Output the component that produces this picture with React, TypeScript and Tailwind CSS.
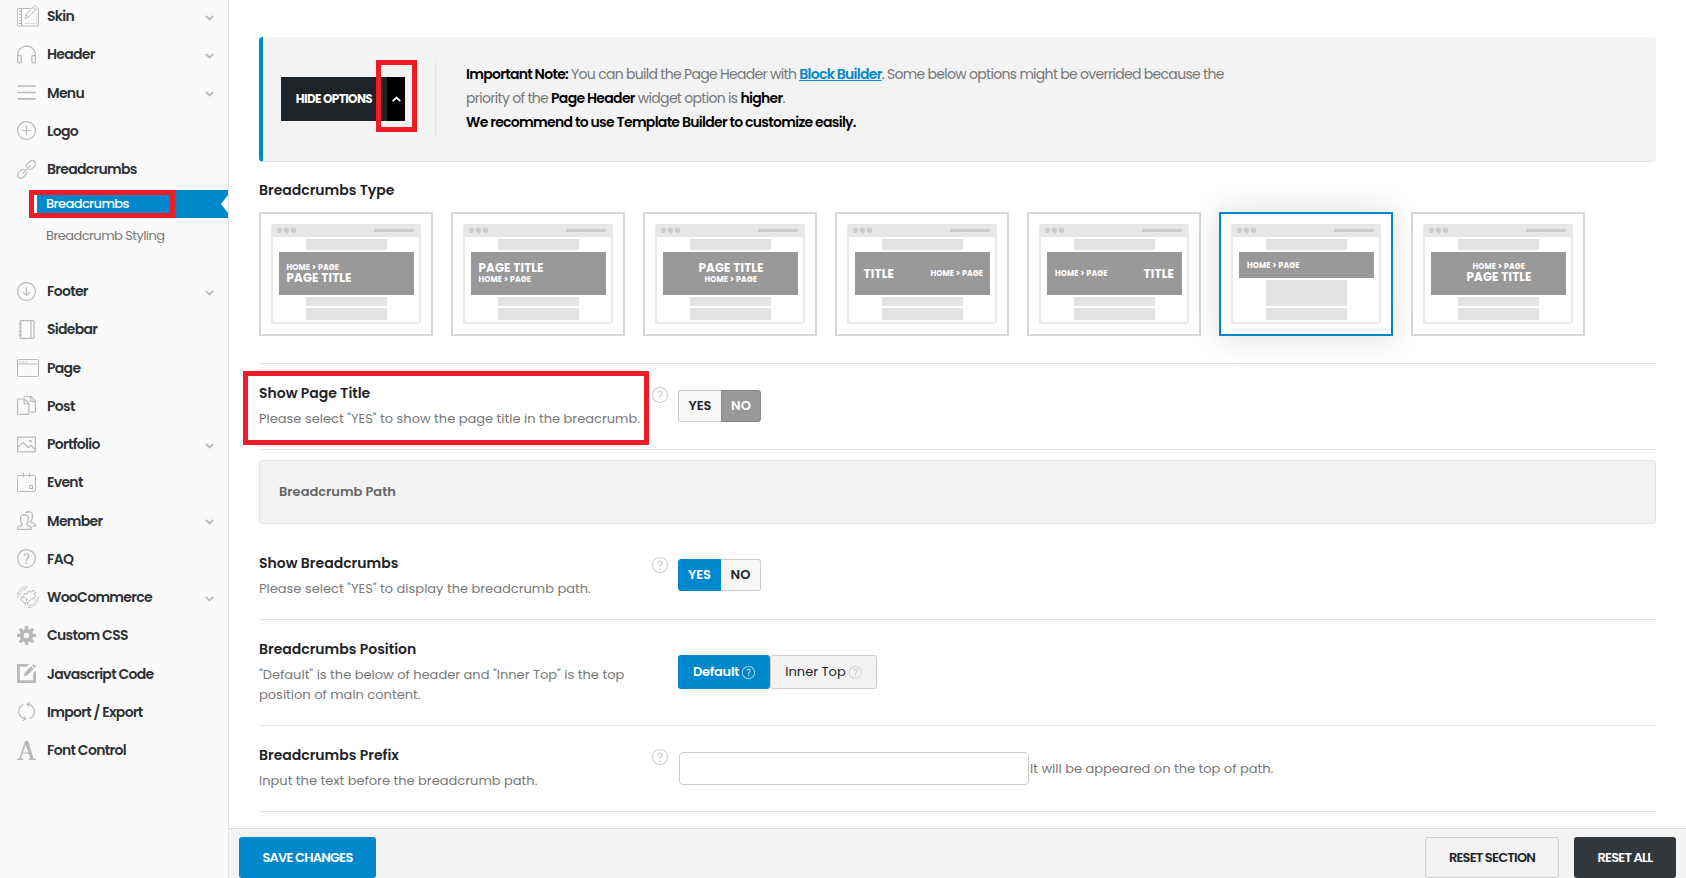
import type { ReactNode } from "react";
import clsx from "clsx";
import {
  SlEarphones,
  SlMenu,
  SlPlus,
  SlLink,
  SlArrowDownCircle,
  SlNotebook,
  SlDocs,
  SlPicture,
  SlPeople,
  SlQuestion,
  SlRefresh,
} from "react-icons/sl";

interface NavEntry {
  label: string;
  icon: ReactNode;
  expandable?: boolean;
}

const SkinIcon = () => (
  <svg width="22" height="22" viewBox="0 0 22 22" fill="none" stroke="currentColor" strokeWidth="1">
    <path d="M13.5 3.5H1.5a1 1 0 0 0-1 1v15.5a1 1 0 0 0 1 1h19a1 1 0 0 0 1-1V4.5a1 1 0 0 0-1-1" />
    <path d="M4.5 3.5v17.5M2 6.5h2M2 9.5h2M2 12.5h2M2 15.5h2M2 18.5h2" />
    <path d="M8 13.5l1-4L17.5.9c.8-.7 3.2 1.4 2.4 2.4L11.5 12zM16 2.5l2.4 2.4M9 9.5l2.5 2.5" />
    <path d="M19.5 8v10.5h-12" strokeOpacity=".4" />
  </svg>
);

const PageIcon = () => (
  <svg width="22" height="18" viewBox="0 0 22 18" fill="none" stroke="currentColor" strokeWidth="1">
    <rect x=".5" y=".5" width="21" height="17" rx="1.5" />
    <path d="M.5 5h21" />
    <path d="M2.5 3h1.5M5.5 3H7M8.5 3H10" />
  </svg>
);

const EventIcon = () => (
  <svg width="19" height="19" viewBox="0 0 19 19" fill="none" stroke="currentColor" strokeWidth="1">
    <rect x=".5" y="2.5" width="18" height="16" rx="1" />
    <path d="M6.5 0v4M12.5 0v4" />
    <rect x="12.5" y="12.5" width="3" height="3" />
  </svg>
);

const WooIcon = () => (
  <svg width="22" height="22" viewBox="0 0 22 22" fill="none" stroke="currentColor" strokeWidth="1">
    <path d="M1 12C-.3 5.5 4 .8 10.5.8M3 9.5C3.2 5.5 6 3 9.5 2.8M21 10.5c1 6-3.5 11-10 11M19 13c-.5 3.5-3 6-7 6.5" strokeDasharray="3 .7" />
    <path d="M5 11l2-1.500.5-2L10 8l1-2.500 2-1 1 2 2-2.500 2.500 3L17 8.500l1.500 1-1.500 3-2.500.5-4 4H7L3.500 13z" />
    <path d="M5.5 11.5c2-.5 4.5.5 4 3M9 14.5l1.5-1M7.5 16.5l1 3M10.5 17l.5 2.5" />
  </svg>
);

const GearIcon = () => (
  <svg width="19" height="19" viewBox="0 0 19 19">
    <circle cx="9.5" cy="9.5" r="4.7" fill="none" stroke="currentColor" strokeWidth="3.8" />
    <g fill="currentColor">
      {[0, 45, 90, 135, 180, 225, 270, 315].map((deg) => (
        <path key={deg} d="M8 0h3l.4 4H7.6z" transform={`rotate(${deg} 9.5 9.5)`} />
      ))}
    </g>
  </svg>
);

const EditIcon = () => (
  <svg width="19" height="19" viewBox="0 0 19 19" fill="currentColor">
    <path d="M0 0h12.5L9.7 2.8H2.8v13.4h13.4V9.3L19 6.5V19H0z" />
    <path d="M14 2.3l2.7 2.7-6.2 6.2-3.7 1 1-3.7zM14.9 1.4L16.3 0 19 2.7l-1.4 1.4z" />
  </svg>
);

const FontIcon = () => (
  <svg width="19" height="19" viewBox="0 0 19 19" fill="currentColor" fillRule="evenodd">
    <path d="M8 0h3.3l4.9 16.2c.3 1 .9 1.500 2.800 1.600V19h-7.500v-1.200c1.400-.1 1.700-.6 1.400-1.600l-1-3.400H5.400l-1 3.200c-.3 1.200.1 1.700 1.800 1.800V19H0v-1.200c1.700-.1 2.400-.6 2.800-1.800zM8.700 4.200L5.900 11.500h5.400z" />
  </svg>
);

const Chevron = ({ className }: { className?: string }) => (
  <svg width="9" height="6" viewBox="0 0 9 6" fill="none" stroke="currentColor" strokeWidth="1.8" className={className}>
    <path d="M.7.8l3.800 3.700L8.300.8" />
  </svg>
);

const navTop: NavEntry[] = [
  { label: "Skin", icon: <SkinIcon />, expandable: true },
  { label: "Header", icon: <SlEarphones />, expandable: true },
  { label: "Menu", icon: <SlMenu />, expandable: true },
  { label: "Logo", icon: <SlPlus /> },
  { label: "Breadcrumbs", icon: <SlLink /> },
];

const navBottom: NavEntry[] = [
  { label: "Footer", icon: <SlArrowDownCircle />, expandable: true },
  { label: "Sidebar", icon: <SlNotebook /> },
  { label: "Page", icon: <PageIcon /> },
  { label: "Post", icon: <SlDocs /> },
  { label: "Portfolio", icon: <SlPicture />, expandable: true },
  { label: "Event", icon: <EventIcon /> },
  { label: "Member", icon: <SlPeople />, expandable: true },
  { label: "FAQ", icon: <SlQuestion /> },
  { label: "WooCommerce", icon: <WooIcon />, expandable: true },
  { label: "Custom CSS", icon: <GearIcon /> },
  { label: "Javascript Code", icon: <EditIcon /> },
  { label: "Import / Export", icon: <SlRefresh /> },
  { label: "Font Control", icon: <FontIcon /> },
];

const NavItem = ({ label, icon, expandable }: NavEntry) => (
  <li className="flex h-[38.25px] items-center pl-[17px] pr-[14px]">
    <span className="flex w-[30px] shrink-0 items-center text-[19px] text-[#b9b9b9]">{icon}</span>
    <span className="flex-1 whitespace-nowrap text-sm font-semibold tracking-[-0.05em] text-[#2c3136]">{label}</span>
    {expandable && <Chevron className="mt-[3px] text-[#bbb]" />}
  </li>
);

const Sidebar = () => (
  <aside className="w-[229px] shrink-0 overflow-hidden border-r border-[#e5e5e5] bg-[#fafafa]">
    <ul className="-mt-[3px]">
      {navTop.map((item) => (
        <NavItem key={item.label} {...item} />
      ))}
    </ul>
    <ul className="mt-[1.75px] h-[82px] text-[13px]">
      <li className="relative ml-[29px] flex h-7 items-center bg-[#08c] pl-[17px] font-medium tracking-[-0.045em] text-white">
        Breadcrumbs
        {/* highlight frame */}
        <span className="absolute left-0 top-0 h-7 w-[146px] border-[5px] border-[#ee1c25]" />
        <span className="absolute left-[5px] top-[5px] h-[18px] w-[3px] bg-white" />
        <svg className="absolute right-0 top-[5px]" width="7" height="18" viewBox="0 0 7 18">
          <path d="M7 0v18L0 9z" fill="#fff" />
        </svg>
      </li>
      <li className="mt-1 flex h-7 items-center pl-[46px] tracking-[-0.042em] text-[#777]">Breadcrumb Styling</li>
    </ul>
    <ul>
      {navBottom.map((item) => (
        <NavItem key={item.label} {...item} />
      ))}
    </ul>
  </aside>
);

const Notice = () => (
  <div className="flex h-[125px] items-center rounded border-b border-l-4 border-b-[#e3e3e3] border-l-[#08c] bg-[#f3f3f3] pl-[18px]">
    <button className="relative flex h-11 w-[124px] bg-[#1d2327] text-white">
      <span className="flex h-full w-[106px] items-center justify-center whitespace-nowrap text-xs font-bold tracking-[-0.6px]">
        HIDE OPTIONS
      </span>
      <span className="flex h-full w-[18px] items-center justify-center bg-black">
        <Chevron className="rotate-180" />
      </span>
      <span className="absolute -top-[17px] left-[95px] h-[72px] w-[41px] border-[5px] border-[#ee1c25]" />
    </button>
    <div className="ml-[30px] h-[74px] w-px bg-[#e3e3e3]" />
    <div className="mb-[2px] ml-[30px] whitespace-nowrap text-sm leading-6 tracking-[-0.05em] text-[#777]">
      <p>
        <b className="font-semibold text-black">Important Note:</b> You can build the Page Header with{" "}
        <a className="font-semibold text-[#08c] underline">Block Builder</a>. Some below options might be overrided because the
      </p>
      <p>
        priority of the <b className="font-semibold text-black">Page Header</b> widget option is{" "}
        <b className="font-semibold text-black">higher</b>.
      </p>
      <p className="font-semibold text-black">We recommend to use Template Builder to customize easily.</p>
    </div>
  </div>
);

interface Caption {
  text: "HOME > PAGE" | "PAGE TITLE" | "TITLE";
  x: number;
  y: number;
}

interface Layout {
  captions: Caption[];
  short?: boolean;
}

const captionWidth = { "HOME > PAGE": 52.5, "PAGE TITLE": 65, TITLE: 30.5 };

const layouts: Layout[] = [
  { captions: [{ text: "HOME > PAGE", x: 15.5, y: 46.2 }, { text: "PAGE TITLE", x: 15.5, y: 58 }] },
  { captions: [{ text: "PAGE TITLE", x: 15.5, y: 48 }, { text: "HOME > PAGE", x: 15.5, y: 58 }] },
  { captions: [{ text: "PAGE TITLE", x: 43.5, y: 48 }, { text: "HOME > PAGE", x: 49.5, y: 58 }] },
  { captions: [{ text: "TITLE", x: 16.5, y: 54 }, { text: "HOME > PAGE", x: 83.5, y: 52.2 }] },
  { captions: [{ text: "HOME > PAGE", x: 16, y: 52.2 }, { text: "TITLE", x: 104.5, y: 54 }] },
  { captions: [{ text: "HOME > PAGE", x: 16, y: 44.2 }], short: true },
  { captions: [{ text: "HOME > PAGE", x: 49.5, y: 45.2 }, { text: "PAGE TITLE", x: 43.5, y: 57.2 }] },
];

const LayoutCard = ({ layout }: { layout: Layout }) => (
  <div
    className={clsx(
      "h-[124px] w-[174px] border-2 bg-white p-[10px]",
      layout.short ? "border-[#08c] shadow-[0_0_30px_rgba(0,0,0,0.15)]" : "border-[#d8d8d8]"
    )}
  >
    <svg width="150" height="100" viewBox="0 0 150 100">
      <rect x="1" y="1" width="148" height="98" rx="2.5" fill="#fff" stroke="#e7e7e7" strokeWidth="2" />
      <path d="M0 13V3a3 3 0 0 1 3-3h144a3 3 0 0 1 3 3v10z" fill="#e7e7e7" />
      <g fill="#ccc">
        <circle cx="8.4" cy="6.5" r="2.7" />
        <circle cx="15.4" cy="6.5" r="2.7" />
        <circle cx="22.4" cy="6.5" r="2.7" />
        <rect x="103" y="5" width="40" height="3" rx="1.5" />
      </g>
      <g fill="#e3e3e3">
        <rect x="35" y="15" width="81" height="11" />
        <rect x="35" y={layout.short ? 56 : 73} width="81" height={layout.short ? 26 : 9} />
        <rect x="35" y="84" width="81" height="12" />
      </g>
      <rect x="8" y="28" width="135" height={layout.short ? 26 : 43} fill="#999" />
      {layout.captions.map(({ text, x, y }) => (
        <text
          key={text}
          x={x}
          y={y}
          fill="#fff"
          fontWeight="700"
          fontSize={text === "HOME > PAGE" ? 7.8 : 11.8}
          textLength={captionWidth[text]}
          lengthAdjust="spacing"
        >
          {text}
        </text>
      ))}
    </svg>
  </div>
);

const Help = ({ className }: { className?: string }) => <SlQuestion className={clsx("shrink-0", className)} />;

interface FieldProps {
  title: string;
  text: ReactNode;
  help?: boolean;
  className?: string;
  children: ReactNode;
}

const Field = ({ title, text, help, className, children }: FieldProps) => (
  <div className={clsx("relative flex border-b border-[#e3e3e3]", className)}>
    <div className="w-[393px] shrink-0 pt-[19px]">
      <h3 className="text-sm font-semibold leading-5 text-[#1d2327]">{title}</h3>
      <div className="mt-[6px] whitespace-nowrap text-[13px] leading-5 text-[#777]">{text}</div>
    </div>
    <div className="w-[26px] shrink-0 pt-[23px] text-base text-[#ccc]">{help && <Help />}</div>
    {children}
  </div>
);

const Switch = ({ on }: { on: boolean }) => (
  <div className={clsx("flex h-8 w-[83px] text-[13px] font-semibold", on ? "mt-[25px]" : "mt-[26px]")}>
    <span
      className={clsx(
        "flex w-[43px] items-center justify-center rounded-l-[3px] border",
        on ? "border-[#08c] bg-[#08c] text-white" : "border-r-0 border-[#ccc] bg-[#f7f7f7] text-[#222529]"
      )}
    >
      YES
    </span>
    <span
      className={clsx(
        "flex w-10 items-center justify-center rounded-r-[3px] border",
        on ? "border-l-0 border-[#ccc] bg-[#f7f7f7] text-[#222529]" : "border-[#8a8a8a] bg-[#999] text-white"
      )}
    >
      NO
    </span>
  </div>
);

const App = () => (
  <div className="flex h-[878px] w-[1686px] overflow-hidden bg-white font-[Poppins,Inter,sans-serif]">
    <Sidebar />
    <div className="flex min-w-0 flex-1 flex-col">
      <main className="h-[828px] overflow-hidden px-[30px] pt-[37px]">
        <Notice />
        <h3 className="mt-[18px] text-sm font-semibold leading-5 text-[#1d2327]">Breadcrumbs Type</h3>
        <div className="mt-3 flex gap-[18px] border-b border-[#e3e3e3] pb-[27px]">
          {layouts.map((layout, idx) => (
            <LayoutCard key={idx} layout={layout} />
          ))}
        </div>

        <Field title="Show Page Title" text={'Please select "YES" to show the page title in the breacrumb.'} help className="h-[86px]">
          <Switch on={false} />
          <span className="absolute -left-4 top-[7px] h-[74px] w-[406px] border-[5px] border-[#ee1c25]" />
        </Field>

        <div className="mt-[10px] flex h-16 items-center rounded border border-[#e3e3e3] bg-[#f3f3f3] px-[19px] text-[13px] font-semibold text-[#666]">
          Breadcrumb Path
        </div>

        <Field title="Show Breadcrumbs" text={'Please select "YES" to display the breadcrumb path.'} help className="mt-[10px] h-[86px]">
          <Switch on />
        </Field>

        <Field
          title="Breadcrumbs Position"
          text={
            <>
              "Default" is the below of header and "Inner Top" is the top
              <br />
              position of main content.
            </>
          }
          className="h-[106px]"
        >
          <div className="mt-[35px] flex h-[34px] text-[13px]">
            <span className="flex w-[92px] items-center justify-center gap-[3px] rounded-[3px] bg-[#08c] font-semibold tracking-[-0.02em] text-white">
              Default <Help className="opacity-80" />
            </span>
            <span className="flex w-[107px] items-center justify-center gap-[3px] rounded-[3px] border border-[#ccc] bg-[#f3f3f3] text-[#222529]">
              Inner Top <Help className="text-[#ccc]" />
            </span>
          </div>
        </Field>

        <Field title="Breadcrumbs Prefix" text="Input the text before the breadcrumb path." help className="h-[86px]">
          <div className="mt-[26px] flex h-[33px] items-center whitespace-nowrap text-[13px] text-[#777]">
            <input className="mx-px h-full w-[350px] rounded border border-[#ccc] bg-white" />
            It will be appeared on the top of path.
          </div>
        </Field>
      </main>

      <footer className="flex h-[50px] gap-[15px] border-t border-[#ddd] bg-[#f3f3f3] px-[10px] pt-2 text-[13px] font-semibold tracking-[-0.06em]">
        <button className="h-[41px] w-[137px] rounded-[3px] bg-[#08c] text-white">SAVE CHANGES</button>
        <button className="ml-auto h-[41px] w-[134px] rounded-[3px] border border-[#ccc] text-[#1d2327]">RESET SECTION</button>
        <button className="h-[41px] w-[102px] rounded-[3px] bg-[#32373c] text-white">RESET ALL</button>
      </footer>
    </div>
  </div>
);

export default App;
